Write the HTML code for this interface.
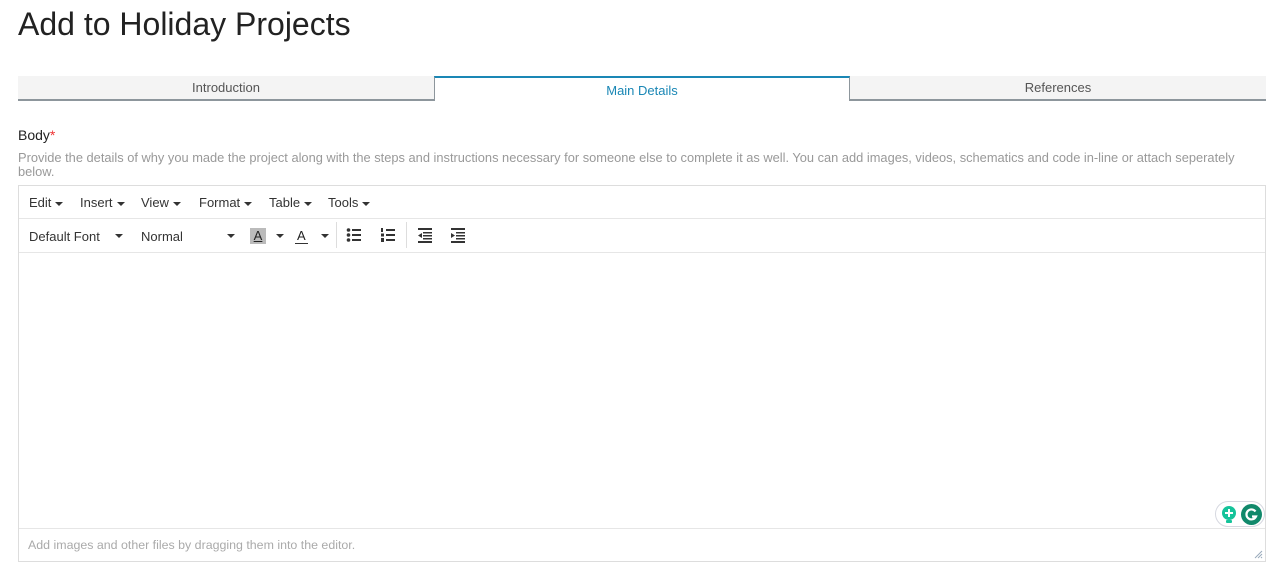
<!DOCTYPE html>
<html><head><style>
*{box-sizing:border-box;margin:0;padding:0}
body{width:1280px;height:588px;background:#fff;font-family:"Liberation Sans",Arial,sans-serif;color:#333;position:relative;overflow:hidden}
.abs{position:absolute}
h1{position:absolute;left:18px;top:6px;font-size:32px;font-weight:normal;color:#222}
.tab{position:absolute;top:76px;height:25px;font-size:13px;text-align:center;line-height:24px;color:#555;background:#f4f4f4;border-bottom:2px solid #8d969c}
.tab.act{background:#fff;border:1px solid #8d969c;border-top:2px solid #1a87b5;border-bottom:none;color:#1a87b5;line-height:26px}
.menu span{position:absolute;top:195px;font-size:13px;color:#333}
.caret{display:inline-block;width:0;height:0;border-left:4px solid transparent;border-right:4px solid transparent;border-top:4px solid #333;vertical-align:middle;margin-left:4px}
.tb{position:absolute;top:229px;font-size:13px;color:#333}
</style></head><body>
<h1>Add to Holiday Projects</h1>
<div class="tab" style="left:18px;width:416px">Introduction</div>
<div class="tab act" style="left:434px;width:416px">Main Details</div>
<div class="tab" style="left:850px;width:416px">References</div>
<div class="abs" style="left:18px;top:127px;font-size:14px;color:#222">Body<span style="color:#e33">*</span></div>
<div class="abs" style="left:18px;top:151px;width:1240px;font-size:12.85px;line-height:14px;color:#999">Provide the details of why you made the project along with the steps and instructions necessary for someone else to complete it as well. You can add images, videos, schematics and code in-line or attach seperately below.</div>
<div class="abs" style="left:18px;top:185px;width:1248px;height:377px;border:1px solid #ddd"></div>
<div class="abs" style="left:19px;top:218px;width:1246px;border-top:1px solid #e6e6e6"></div>
<div class="abs" style="left:19px;top:252px;width:1246px;border-top:1px solid #e6e6e6"></div>
<div class="abs" style="left:19px;top:528px;width:1246px;border-top:1px solid #e6e6e6"></div>
<div class="menu">
<span style="left:29px">Edit<i class="caret"></i></span>
<span style="left:80px">Insert<i class="caret"></i></span>
<span style="left:141px">View<i class="caret"></i></span>
<span style="left:199px">Format<i class="caret"></i></span>
<span style="left:269px">Table<i class="caret"></i></span>
<span style="left:328px">Tools<i class="caret"></i></span>
</div>
<span class="tb" style="left:29px">Default Font</span><i class="caret abs" style="left:111px;top:234px"></i>
<span class="tb" style="left:141px">Normal</span><i class="caret abs" style="left:223px;top:234px"></i>
<span class="abs" style="left:250px;top:228px;width:16px;height:16px;background:#bbb;font-size:13px;text-align:center;line-height:16px;color:#222;text-decoration:underline">A</span><i class="caret abs" style="left:272px;top:234px"></i>
<span class="abs" style="left:295px;top:228px;font-size:13px;color:#222;border-bottom:1px solid #333;line-height:15px;padding:0 2px">A</span><i class="caret abs" style="left:317px;top:234px"></i>
<div class="abs" style="left:336px;top:222px;height:26px;border-left:1px solid #ddd"></div>
<div class="abs" style="left:406px;top:222px;height:26px;border-left:1px solid #ddd"></div>
<svg class="abs" style="left:346px;top:227px" width="16" height="16"><g fill="#333"><circle cx="2.5" cy="3" r="1.8"/><circle cx="2.5" cy="8" r="1.8"/><circle cx="2.5" cy="13" r="1.8"/><rect x="6" y="2" width="9" height="2"/><rect x="6" y="7" width="9" height="2"/><rect x="6" y="12" width="9" height="2"/></g></svg>
<svg class="abs" style="left:380px;top:227px" width="16" height="16"><g fill="#333"><rect x="1" y="1" width="2" height="4"/><rect x="1" y="6.5" width="3" height="3"/><rect x="1" y="11" width="3" height="4"/><rect x="6" y="2" width="9" height="2"/><rect x="6" y="7" width="9" height="2"/><rect x="6" y="12" width="9" height="2"/></g></svg>
<svg class="abs" style="left:417px;top:227px" width="16" height="16"><g fill="#333"><rect x="1" y="1" width="14" height="2"/><rect x="6" y="5" width="9" height="1.5"/><rect x="6" y="8" width="9" height="1.5"/><rect x="6" y="11" width="9" height="1.5"/><rect x="1" y="14" width="14" height="2"/><path d="M5 6L1 8.5L5 11z"/></g></svg>
<svg class="abs" style="left:450px;top:227px" width="16" height="16"><g fill="#333"><rect x="1" y="1" width="14" height="2"/><rect x="6" y="5" width="9" height="1.5"/><rect x="6" y="8" width="9" height="1.5"/><rect x="6" y="11" width="9" height="1.5"/><rect x="1" y="14" width="14" height="2"/><path d="M1 6L5 8.5L1 11z"/></g></svg>
<div class="abs" style="left:1215px;top:501px;width:50px;height:26px;border:1px solid #d6d8e0;border-radius:13px;background:#fff"></div>
<svg class="abs" style="left:1220px;top:505px" width="18" height="20"><circle cx="9" cy="8" r="7" fill="#15c39a"/><rect x="6" y="15" width="6" height="3" rx="1" fill="#15c39a"/><path d="M9 4v8M5 8h8" stroke="#fff" stroke-width="2"/></svg>
<svg class="abs" style="left:1241px;top:504px" width="21" height="21"><circle cx="10.5" cy="10.5" r="10.5" fill="#11896b"/><path d="M14.5 7.5A5 5 0 1 0 15 12.5H11" stroke="#fff" stroke-width="2.2" fill="none"/></svg>
<div class="abs" style="left:28px;top:538px;font-size:12.4px;color:#aaa">Add images and other files by dragging them into the editor.</div>
<svg class="abs" style="left:1254px;top:550px" width="9" height="9"><path d="M8 1L1 8M8 4L4 8M8 7L7 8" stroke="#9ab" stroke-width="1"/></svg>
</body></html>
